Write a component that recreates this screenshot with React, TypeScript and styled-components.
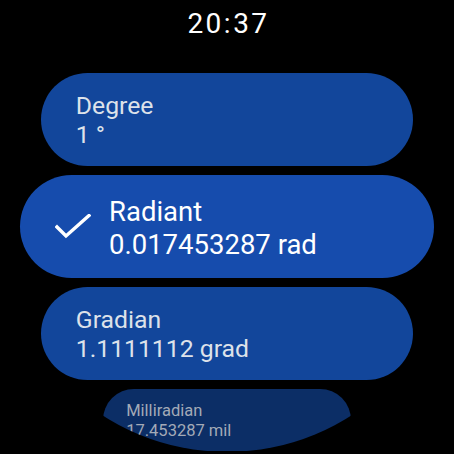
import * as React from "react";
import styled, { createGlobalStyle } from "styled-components";

const GlobalStyle = createGlobalStyle`
  html, body {
    margin: 0;
    padding: 0;
    background: #000;
  }
  body {
    font-family: Roboto, "Liberation Sans", sans-serif;
  }
`;

type Tone = "dim" | "bright" | "faded";

const chipColors: Record<Tone, { bg: string; fg: string }> = {
  bright: { bg: "#164cad", fg: "#ffffff" },
  dim: { bg: "#12469b", fg: "#dde2ea" },
  faded: { bg: "#0c2e66", fg: "#a3aab7" },
};

const Screen = styled.div`
  width: 454px;
  height: 454px;
  background: #000;
  overflow: hidden;
  clip-path: circle(230px at 227px 222px);
  display: flex;
  flex-direction: column;
  align-items: center;
`;

const Clock = styled.div`
  height: 63px;
  padding: 10px 0 0 3px;
  font-size: 28px;
  line-height: 28px;
  font-weight: 400;
  letter-spacing: 2.5px;
  color: #fff;
`;

const List = styled.div`
  display: flex;
  flex-direction: column;
  align-items: center;
  gap: 9px;
  width: 100%;
`;

const Chip = styled.div<{ $scale: number; $height: number; $tone: Tone }>`
  box-sizing: border-box;
  flex-shrink: 0;
  width: ${p => 414 * p.$scale}px;
  height: ${p => p.$height}px;
  border-radius: ${p => p.$height / 2}px;
  background: ${p => chipColors[p.$tone].bg};
  color: ${p => chipColors[p.$tone].fg};
  display: flex;
  align-items: center;
  padding-left: ${p => 39 * p.$scale}px;
`;

const IconChip = styled(Chip)`
  padding-left: 35px;
  gap: 18px;
`;

const Labels = styled.div<{ $scale: number }>`
  display: flex;
  flex-direction: column;
  font-size: ${p => 27.5 * p.$scale}px;
  line-height: ${p => 33 * p.$scale}px;
  white-space: nowrap;
  padding-top: ${p => 2 * p.$scale}px;
`;

const CheckIcon = () => (
  <svg width="36" height="26" viewBox="0 0 36 26" fill="none">
    <polyline
      points="2,13 11,22 34,1.5"
      stroke="#fff"
      strokeWidth="3.4"
      strokeLinecap="square"
      strokeLinejoin="miter"
    />
  </svg>
);

const units = [
  { name: "Degree", value: "1 °", scale: 0.9, height: 93, tone: "dim" as Tone },
  { name: "Radiant", value: "0.017453287 rad", scale: 1, height: 103, tone: "bright" as Tone, selected: true },
  { name: "Gradian", value: "1.1111112 grad", scale: 0.9, height: 93, tone: "dim" as Tone },
  { name: "Milliradian", value: "17.453287 mil", scale: 0.6, height: 62, tone: "faded" as Tone },
];

const App = () => (
  <>
    <GlobalStyle />
    <Screen>
      <Clock>20:37</Clock>
      <List>
        {units.map(u =>
          u.selected ? (
            <IconChip key={u.name} $scale={u.scale} $height={u.height} $tone={u.tone}>
              <CheckIcon />
              <Labels $scale={u.scale}>
                <span>{u.name}</span>
                <span>{u.value}</span>
              </Labels>
            </IconChip>
          ) : (
            <Chip key={u.name} $scale={u.scale} $height={u.height} $tone={u.tone}>
              <Labels $scale={u.scale}>
                <span>{u.name}</span>
                <span>{u.value}</span>
              </Labels>
            </Chip>
          )
        )}
      </List>
    </Screen>
  </>
);

export default App;
